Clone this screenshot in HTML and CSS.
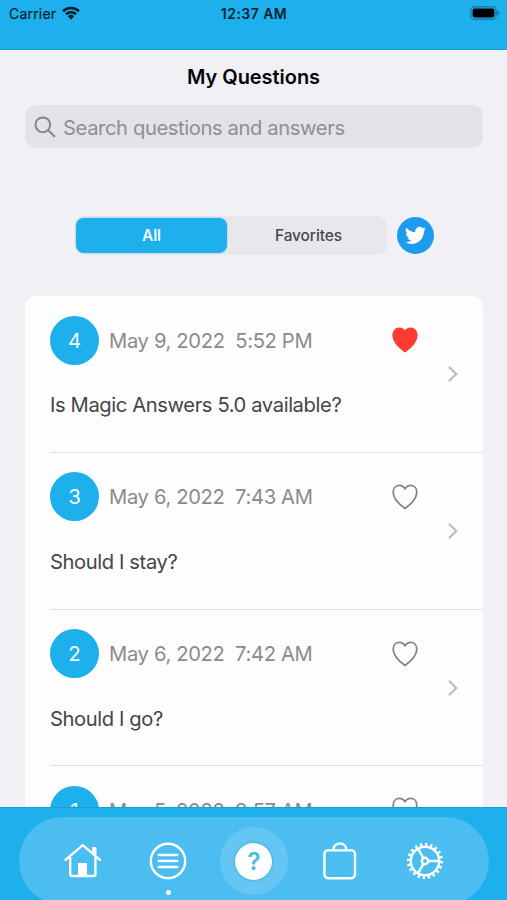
FILE: index.html
```html
<!DOCTYPE html>
<html lang="en">
<head>
<meta charset="utf-8">
<title>My Questions</title>
<link rel="stylesheet" href="styles.css">
</head>
<body>
<svg width="0" height="0" class="defs" aria-hidden="true">
  <symbol id="heart" viewBox="0 0 26 26"><path d="M13 24.4C7.5 20.4 1.2 14.8 1.2 8.2C1.2 4.2 3.8 1.4 7.3 1.4C9.8 1.4 11.8 2.7 13 4.9C14.2 2.7 16.2 1.4 18.7 1.4C22.2 1.4 24.8 4.2 24.8 8.2C24.8 14.8 18.5 20.4 13 24.4Z"/></symbol>
  <symbol id="chevron" viewBox="0 0 10 16"><path d="M1.6 1.5L8.3 8L1.6 14.5"/></symbol>
</svg>
<div class="phone">
  <header class="status">
    <div class="carrier"><span>Carrier</span>
      <svg class="wifi" viewBox="0 0 18 14"><path d="M1 5.2A11.5 11.5 0 0 1 17 5.2M4 8.3A7.2 7.2 0 0 1 14 8.3"/><path class="dot" d="M5.9 10.3A4.5 4.5 0 0 1 12.1 10.3L9 13.7Z"/></svg>
    </div>
    <span class="clock">12:37 AM</span>
    <svg class="battery" viewBox="0 0 30 14"><rect x="0.8" y="0.8" width="25.4" height="12.4" rx="3.8"/><rect class="charge" x="2.6" y="2.6" width="21.8" height="8.8" rx="1.8"/><path class="tip" d="M27.5 4.8Q29.6 5.4 29.6 7T27.5 9.2Z"/></svg>
  </header>
  <main class="content">
    <h1>My Questions</h1>
    <div class="search">
      <svg viewBox="0 0 22 22"><circle cx="8.8" cy="8.8" r="7.4"/><path d="M14.2 14.2L20.4 20.2"/></svg>
      <span>Search questions and answers</span>
    </div>
    <div class="filters">
      <div class="segments"><div class="segment active">All</div><div class="segment">Favorites</div></div>
      <div class="twitter"><svg viewBox="0 0 24 24"><path d="M23.95 4.57a10 10 0 0 1-2.82.77 4.96 4.96 0 0 0 2.16-2.72c-.95.55-2 .95-3.13 1.18a4.92 4.92 0 0 0-8.38 4.48C7.69 8.09 4.07 6.13 1.64 3.16a4.92 4.92 0 0 0 1.52 6.57 4.9 4.9 0 0 1-2.23-.61v.06a4.92 4.92 0 0 0 3.95 4.83 5 5 0 0 1-2.21.08 4.94 4.94 0 0 0 4.6 3.42A9.87 9.87 0 0 1 0 19.54a14 14 0 0 0 7.55 2.21c9.05 0 14-7.5 14-13.98 0-.21 0-.42-.02-.63a9.94 9.94 0 0 0 2.42-2.57z"/></svg></div>
    </div>
    <section class="list">
      <article class="row">
        <div class="meta"><span class="badge">4</span><span class="date">May 9, 2022&nbsp; 5:52 PM</span><svg class="heart filled"><use href="#heart"/></svg></div>
        <p>Is Magic Answers 5.0 available?</p>
        <svg class="chevron"><use href="#chevron"/></svg>
      </article>
      <article class="row">
        <div class="meta"><span class="badge">3</span><span class="date">May 6, 2022&nbsp; 7:43 AM</span><svg class="heart"><use href="#heart"/></svg></div>
        <p>Should I stay?</p>
        <svg class="chevron"><use href="#chevron"/></svg>
      </article>
      <article class="row">
        <div class="meta"><span class="badge">2</span><span class="date">May 6, 2022&nbsp; 7:42 AM</span><svg class="heart"><use href="#heart"/></svg></div>
        <p>Should I go?</p>
        <svg class="chevron"><use href="#chevron"/></svg>
      </article>
      <article class="row">
        <div class="meta"><span class="badge">1</span><span class="date">May 5, 2022&nbsp; 9:57 AM</span><svg class="heart"><use href="#heart"/></svg></div>
      </article>
    </section>
  </main>
  <footer class="tabbar">
    <nav class="tabs">
      <div class="tab"><svg viewBox="0 0 38 38"><path d="M1.5 17.8L18.8 3.2L36 17.8M29.3 11.5V6.2H31.3V13.5M6.2 16V32.2Q6.2 34 8 34H29.6Q31.4 34 31.4 32.2V16"/><path class="solid" d="M14 21H23V33.5H14Z"/></svg></div>
      <div class="tab selected"><svg viewBox="0 0 38 38"><circle cx="19" cy="19" r="17.2"/><path d="M9.7 13H28.3M9.7 19H28.3M9.7 25H28.3"/></svg></div>
      <div class="tab"><div class="halo"><span class="ask">?</span></div></div>
      <div class="tab"><svg viewBox="0 0 38 38"><rect x="3.4" y="8.4" width="30.6" height="27.8" rx="3.6"/><path d="M12.3 7.8C12.3 -.6 25.3 -.6 25.3 7.8"/></svg></div>
      <div class="tab"><svg viewBox="0 0 38 38"><circle cx="19" cy="19" r="14.2"/><circle class="teeth" cx="19" cy="19" r="16.6" pathLength="80"/><circle cx="19" cy="19" r="3.2"/><path d="M22.2 19H33.2M17.4 16.2L11.9 6.7M17.4 21.8L11.9 31.3"/></svg></div>
    </nav>
  </footer>
</div>
</body>
</html>
```
FILE: styles.css
```css
* { box-sizing: border-box; }
body { margin: 0; font-family: Inter, "Liberation Sans", sans-serif; background: #f1f0f5; }
svg { display: block; fill: none; stroke-linecap: round; stroke-linejoin: round; }
.defs { position: absolute; }
.phone { width: 507px; height: 900px; display: flex; flex-direction: column; overflow: hidden; }

.status { height: 50px; flex: none; background: #1eb0ec; border-bottom: 1px solid #1aa3dd; display: grid; grid-template-columns: 1fr auto 1fr; align-items: start; padding: 5px 7px 0 9px; font-size: 14px; line-height: 18px; color: #09222d; }
.carrier { display: flex; gap: 6px; letter-spacing: .2px; -webkit-text-stroke: .2px #09222d; }
.wifi { width: 18px; height: 14px; margin-top: 1px; stroke: #031d29; stroke-width: 2.6; stroke-linecap: butt; }
.wifi .dot { fill: #031d29; stroke: none; }
.clock { font-weight: 600; letter-spacing: .45px; margin-right: 1px; }
.battery { width: 30px; height: 14px; margin-top: 1px; justify-self: end; stroke: #147ca6; stroke-width: 1.4; }
.battery .charge { fill: #000; stroke: none; }
.battery .tip { fill: #147ca6; stroke: none; }

.content { flex: 1; min-height: 0; overflow: hidden; padding: 14px 25px 0; }
h1 { margin: 0; text-align: center; font-size: 20px; line-height: 26px; font-weight: 600; letter-spacing: -.05px; color: #050506; }
.search { height: 43px; margin: 15px -1px 0 0; border-radius: 11px; background: #e3e2e7; display: flex; align-items: center; gap: 7px; padding: 1px 9px 0; font-size: 20.2px; letter-spacing: -.39px; color: #8f8e94; }
.search svg { width: 22px; height: 22px; stroke: #87868c; stroke-width: 2; }
.filters { display: flex; align-items: center; gap: 10px; margin: 68px 0 0 50px; }
.segments { width: 312px; height: 39px; padding: 1px; border-radius: 10px; background: #e8e7ec; display: flex; font-size: 15.5px; font-weight: 500; letter-spacing: -.1px; color: #48484a; }
.segment { flex: 1; display: flex; align-items: center; justify-content: center; }
.segment.active { flex: none; width: 151px; height: 35px; margin: 1px 4px 0 0; border-radius: 8px; background: #1eb0ec; color: #f1fbff; font-weight: 600; box-shadow: 0 0 2px #8abbd0; }
.twitter { width: 37px; height: 37px; border-radius: 50%; background: #1d9bf0; display: grid; place-items: center; }
.twitter svg { width: 21px; height: 21px; fill: #fff; }

.list { margin: 41px -1px 0 0; background: #fdfdfd; border-radius: 11px; padding-left: 25px; }
.row { height: 156.8px; padding-top: 19px; border-bottom: 1.5px solid #e1e1e3; display: grid; grid-template: 50px 1fr / 1fr 18px; column-gap: 23px; padding-right: 21px; }
.meta { display: flex; align-items: center; font-size: 20.2px; color: #8b8b8d; }
.date { letter-spacing: -.35px; }
.badge { width: 49px; height: 49px; border-radius: 50%; background: #1eb0ec; color: #f4fcff; display: grid; place-items: center; margin-right: 10px; font-size: 20.5px; }
.heart { width: 26px; height: 26px; margin-left: auto; margin-right: 3px; stroke: #858587; stroke-width: 1.8; }
.heart.filled { fill: #fe3b2f; stroke: #fe3b2f; }
.row p { grid-column: 1; grid-row: 2; margin: 27px 0 0; font-size: 20.2px; letter-spacing: -.4px; line-height: 26px; color: #454547; white-space: nowrap; }
.chevron { grid-column: 2; grid-row: 1 / 3; width: 10px; height: 16px; margin: 51px 0 0 4px; stroke: #bdbdbf; stroke-width: 2.3; }

.tabbar { height: 93px; flex: none; background: #1eb0ec; border-top: 1px solid #1a9edb; padding: 9px 18px 0 19px; }
.tabs { height: 88px; border-radius: 44px; background: #4bbdf1; padding: 0 21px; display: flex; }
.tab { flex: 1; display: flex; align-items: center; justify-content: center; position: relative; }
.tab svg { width: 38px; height: 38px; stroke: #fff; stroke-width: 2.4; }
.tab .solid { fill: #fff; stroke: none; }
.tab .teeth { stroke-width: 3; stroke-linecap: butt; stroke-dasharray: 1.8 2.2; }
.tab.selected::after { content: ""; position: absolute; width: 5px; height: 5px; border-radius: 50%; background: #fff; top: 73px; }
.halo { flex: none; width: 68px; height: 68px; border-radius: 50%; background: #65c6f3; display: grid; place-items: center; }
.ask { width: 37px; height: 37px; border-radius: 50%; background: #fff; color: #47b9ee; font-size: 24px; font-weight: 600; display: grid; place-items: center; box-shadow: 0 0 3px #2e9bca; }
```
